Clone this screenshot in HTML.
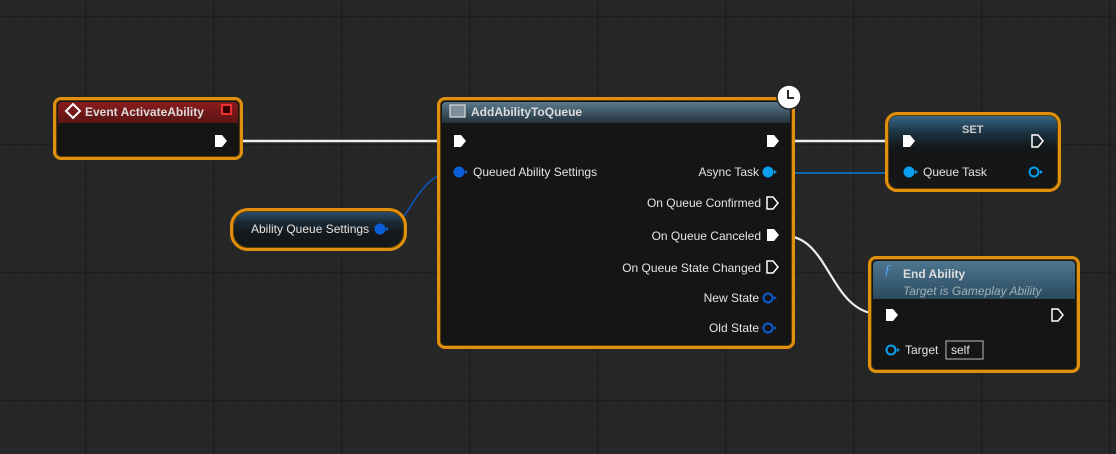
<!DOCTYPE html>
<html><head><meta charset="utf-8"><style>
*{box-sizing:border-box;margin:0;padding:0}
body{width:1116px;height:454px;overflow:hidden;position:relative;font-family:"Liberation Sans","DejaVu Sans",sans-serif;
background-color:#262626;
background-image:
linear-gradient(to right,#1d1d1d 1.5px,transparent 1.5px),
linear-gradient(to bottom,#1d1d1d 1.5px,transparent 1.5px),
linear-gradient(to right,#2a2a2a 1px,transparent 1px),
linear-gradient(to bottom,#2a2a2a 1px,transparent 1px);
background-size:128px 128px,128px 128px,16px 16px,16px 16px;
background-position:85px 0,0 16px,6px 0,0 1px;}
.node{position:absolute;border:3px solid #e0900c;border-radius:8px;background:#141514;box-shadow:0 0 0 1px #5a3e08 inset}
.hdr{position:absolute;left:2px;right:2px;top:2px;height:21px;border-radius:4px 4px 0 0;color:#dcdcdc;font-weight:bold;font-size:12px;line-height:20px;padding-left:24px}
.t{position:absolute;color:#e4e4e4;font-size:12px;white-space:nowrap}
svg{position:absolute;left:0;top:0}
</style></head><body>
<svg width="1116" height="454">
<path d="M238 141 L450 141" stroke="#eee" stroke-width="2.5" fill="none"/>
<path d="M792 141 L900 141" stroke="#eee" stroke-width="2.5" fill="none"/>
<path d="M385 229 C410 229,415 172,455 172" stroke="#0c55b8" stroke-width="1.6" fill="none"/>
<path d="M775 173 L905 173" stroke="#0c7fd6" stroke-width="1.6" fill="none"/>
<path d="M785 236 C830 236,830 314,880 314" stroke="#eee" stroke-width="2.2" fill="none"/>
</svg>

<div class="node" style="left:53px;top:97px;width:190px;height:63px">
<div class="hdr" style="background:linear-gradient(#8a1c1c,#5a1414);padding-left:27px">Event ActivateAbility</div>
</div>
<svg width="1116" height="454">
<path d="M73 104 L80 111 L73 118 L66 111Z" fill="none" stroke="#fff" stroke-width="2"/>
<rect x="222" y="105" width="9" height="9" fill="#300" stroke="#f03030" stroke-width="2"/>
<path d="M215 135 h7 l5 6 l-5 6 h-7z" fill="#fff"/>
</svg>

<div class="node" style="left:230px;top:208px;width:177px;height:43px;border-radius:18px;background:linear-gradient(#2f5070 0,#1a2a36 30%,#15181a 60%)"></div>
<div class="t" style="left:251px;top:222px">Ability Queue Settings</div>
<svg width="1116" height="454"><circle cx="380" cy="229" r="5.5" fill="#0a5ed8"/><path d="M386 227 l3 2 l-3 2z" fill="#0a5ed8"/></svg>

<div class="node" style="left:437px;top:97px;width:358px;height:252px">
<div class="hdr" style="background:linear-gradient(#5a7a8e,#22323c);padding-left:29px">AddAbilityToQueue</div>
</div>
<svg width="1116" height="454">
<rect x="450" y="105" width="15" height="12" fill="#7d8f9c" stroke="#ddd" stroke-width="1.2"/>
<circle cx="789" cy="97" r="12" fill="#fff" stroke="#222" stroke-width="1.5"/>
<path d="M788 90 v8 h6" stroke="#111" stroke-width="1.8" fill="none"/>
<path d="M454 135 h7 l5 6 l-5 6 h-7z" fill="#fff"/>
<path d="M767 135 h7 l5 6 l-5 6 h-7z" fill="#fff"/>
<circle cx="459" cy="172" r="5.5" fill="#0a5ed8"/><path d="M465 170 l3 2 l-3 2z" fill="#0a5ed8"/>
<circle cx="768" cy="172" r="5.5" fill="#0aa0f0"/><path d="M774 170 l3 2 l-3 2z" fill="#0aa0f0"/>
<path d="M767 197 h6 l5 6 l-5 6 h-6z" fill="none" stroke="#fff" stroke-width="1.5"/>
<path d="M767 229 h7 l5 6 l-5 6 h-7z" fill="#fff"/>
<path d="M767 261 h6 l5 6 l-5 6 h-6z" fill="none" stroke="#fff" stroke-width="1.5"/>
<circle cx="768" cy="298" r="4.5" fill="none" stroke="#0a5ed8" stroke-width="2"/><path d="M774 296 l3 2 l-3 2z" fill="#0a5ed8"/>
<circle cx="768" cy="328" r="4.5" fill="none" stroke="#0a5ed8" stroke-width="2"/><path d="M774 326 l3 2 l-3 2z" fill="#0a5ed8"/>
</svg>
<div class="t" style="left:473px;top:165px">Queued Ability Settings</div>
<div class="t" style="right:357px;top:165px">Async Task</div>
<div class="t" style="right:355px;top:196px">On Queue Confirmed</div>
<div class="t" style="right:355px;top:229px">On Queue Canceled</div>
<div class="t" style="right:355px;top:261px">On Queue State Changed</div>
<div class="t" style="right:357px;top:291px">New State</div>
<div class="t" style="right:357px;top:321px">Old State</div>

<div class="node" style="left:885px;top:112px;width:176px;height:80px;border-radius:12px;background:linear-gradient(#3a6a8a 0,#1d3646 22%,#141617 45%)"></div>
<div class="t" style="left:962px;top:124px;font-weight:bold;font-size:11px;color:#ccc">SET</div>
<svg width="1116" height="454">
<path d="M903 135 h7 l5 6 l-5 6 h-7z" fill="#fff"/>
<path d="M1032 135 h6 l5 6 l-5 6 h-6z" fill="none" stroke="#fff" stroke-width="1.5"/>
<circle cx="909" cy="172" r="5.5" fill="#0aa0f0"/><path d="M915 170 l3 2 l-3 2z" fill="#0aa0f0"/>
<circle cx="1034" cy="172" r="4.5" fill="none" stroke="#0aa0f0" stroke-width="2"/><path d="M1040 170 l3 2 l-3 2z" fill="#0aa0f0"/>
</svg>
<div class="t" style="left:923px;top:165px">Queue Task</div>

<div class="node" style="left:868px;top:256px;width:212px;height:117px">
<div class="hdr" style="height:38px;background:linear-gradient(#4d7690,#2a4a5e);padding-left:30px;line-height:17px;padding-top:5px">End Ability<br><span style="font-weight:normal;font-style:italic;color:#9fb0b8">Target is Gameplay Ability</span></div>
</div>
<div class="t" style="left:884px;top:263px;font-style:italic;color:#5aaaf0;font-size:14px;font-family:'Liberation Serif',serif">ƒ</div>
<svg width="1116" height="454">
<path d="M886 309 h7 l5 6 l-5 6 h-7z" fill="#fff"/>
<path d="M1052 309 h6 l5 6 l-5 6 h-6z" fill="none" stroke="#fff" stroke-width="1.5"/>
<circle cx="891" cy="350" r="4.5" fill="none" stroke="#0aa0f0" stroke-width="2"/><path d="M897 348 l3 2 l-3 2z" fill="#0aa0f0"/>
<rect x="946" y="341" width="37" height="18" fill="none" stroke="#bbb" stroke-width="1"/>
</svg>
<div class="t" style="left:905px;top:343px">Target</div>
<div class="t" style="left:951px;top:343px">self</div>
</body></html>
